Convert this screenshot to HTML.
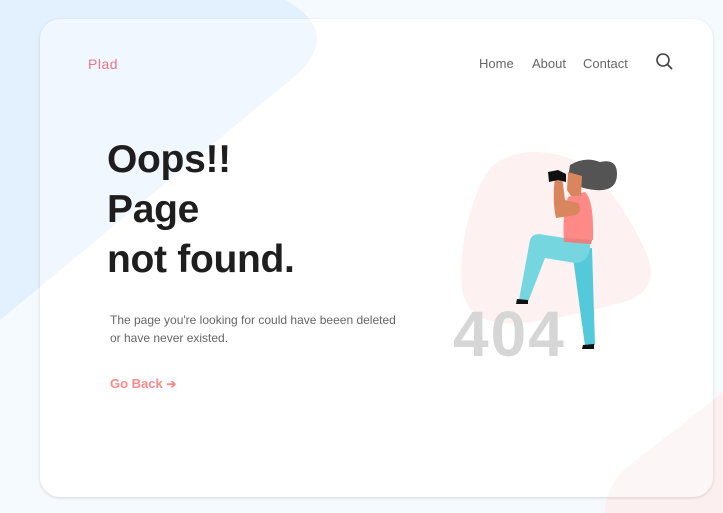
<!DOCTYPE html>
<html><head><meta charset="utf-8"><style>
html,body{margin:0;padding:0;width:723px;height:513px;overflow:hidden;background:#f5faff;font-family:"Liberation Sans",sans-serif;}
svg.bg{position:absolute;left:0;top:0}
.card{position:absolute;left:40px;top:19px;width:673px;height:478px;border-radius:20px;background:rgba(255,255,255,0.45);box-shadow:0 1px 3px rgba(0,0,0,0.14);}
.logo{position:absolute;left:88px;top:56px;color:#ee7482;font-size:14px;letter-spacing:0.5px}
.nav{position:absolute;top:56px;font-size:13px;color:#666}
h1{position:absolute;left:107px;top:135px;margin:0;font-size:39px;line-height:50px;font-weight:bold;color:#1e1e1e;letter-spacing:-0.3px}
p{position:absolute;left:110px;top:311px;margin:0;font-size:12px;line-height:18px;color:#666}
.go{position:absolute;left:110px;top:376px;font-size:13px;font-weight:bold;color:#fa8a8a}
</style></head><body>
<svg class="bg" width="723" height="513">
<path d="M0 0 H285 Q340 30 300 72 L0 320 Z" fill="#e3f0fd"/>
<path d="M723 392 L630 465 Q605 485 605 513 H723 Z" fill="#fcefef"/>
</svg>
<div class="card"></div>
<svg style="position:absolute;left:0;top:0" width="723" height="513">
<clipPath id="c"><rect x="40" y="19" width="673" height="478" rx="20"/></clipPath>
<path d="M300 72 Q340 30 285 0 H723 V392 L630 465 Q605 485 605 513 H0 V320 Z" fill="#fff" clip-path="url(#c)"/>
</svg>
<div class="logo">Plad</div>
<div class="nav" style="left:479px">Home</div>
<div class="nav" style="left:532px">About</div>
<div class="nav" style="left:583px">Contact</div>
<svg style="position:absolute;left:655px;top:52px" width="20" height="20"><circle cx="8" cy="8" r="6" fill="none" stroke="#444" stroke-width="1.6"/><path d="M12.5 12.5 L16.5 16.5" stroke="#444" stroke-width="1.8" stroke-linecap="round"/></svg>
<h1>Oops!!<br>Page<br>not found.</h1>
<p>The page you're looking for could have beeen deleted<br>or have never existed.</p>
<div class="go">Go Back <span style="font-size:12px">➔</span></div>
<svg style="position:absolute;left:0;top:0" width="723" height="513">
<path d="M505 158 Q535 145 575 160 Q610 180 640 240 Q665 285 630 300 Q580 315 530 322 Q470 330 462 290 Q458 240 478 190 Q488 165 505 158 Z" fill="#fdf1f1"/>
<text x="453" y="356" font-family="Liberation Sans" font-weight="bold" font-size="64" fill="#d6d6d6" letter-spacing="2">404</text>
<path d="M572 250 L592 248 L595 345 L585 346 Z" fill="#54c9d9"/>
<path d="M565 238 L590 240 Q592 262 575 263 L545 258 L528 302 L519 300 L530 240 Q533 232 545 235 Z" fill="#76d6e0"/>
<path d="M517 299 L528 300 L528 304 L516 304 Z" fill="#111"/>
<path d="M583 345 L594 344 L594 349 L582 349 Z" fill="#111"/>
<path d="M568 197 L585 192 Q594 200 593 240 L564 242 Q562 215 568 197 Z" fill="#fd8a86"/>
<path d="M564 238 L592 240 L591 244 L564 242 Z" fill="#e9807f"/>
<path d="M570 165 Q585 156 600 162 Q617 158 617 174 Q617 192 595 190 Q575 188 568 178 Z" fill="#545454"/>
<path d="M568 172 L582 176 L581 196 L571 196 L567 190 Z" fill="#d9865e"/>
<path d="M555 178 L562 177 L565 200 L578 203 Q583 210 576 215 L556 218 Q552 200 555 178 Z" fill="#d9865e"/>
<path d="M548 172 L558 170 L566 174 L566 182 L558 180 L549 182 Z" fill="#111"/>
</svg>
</body></html>
